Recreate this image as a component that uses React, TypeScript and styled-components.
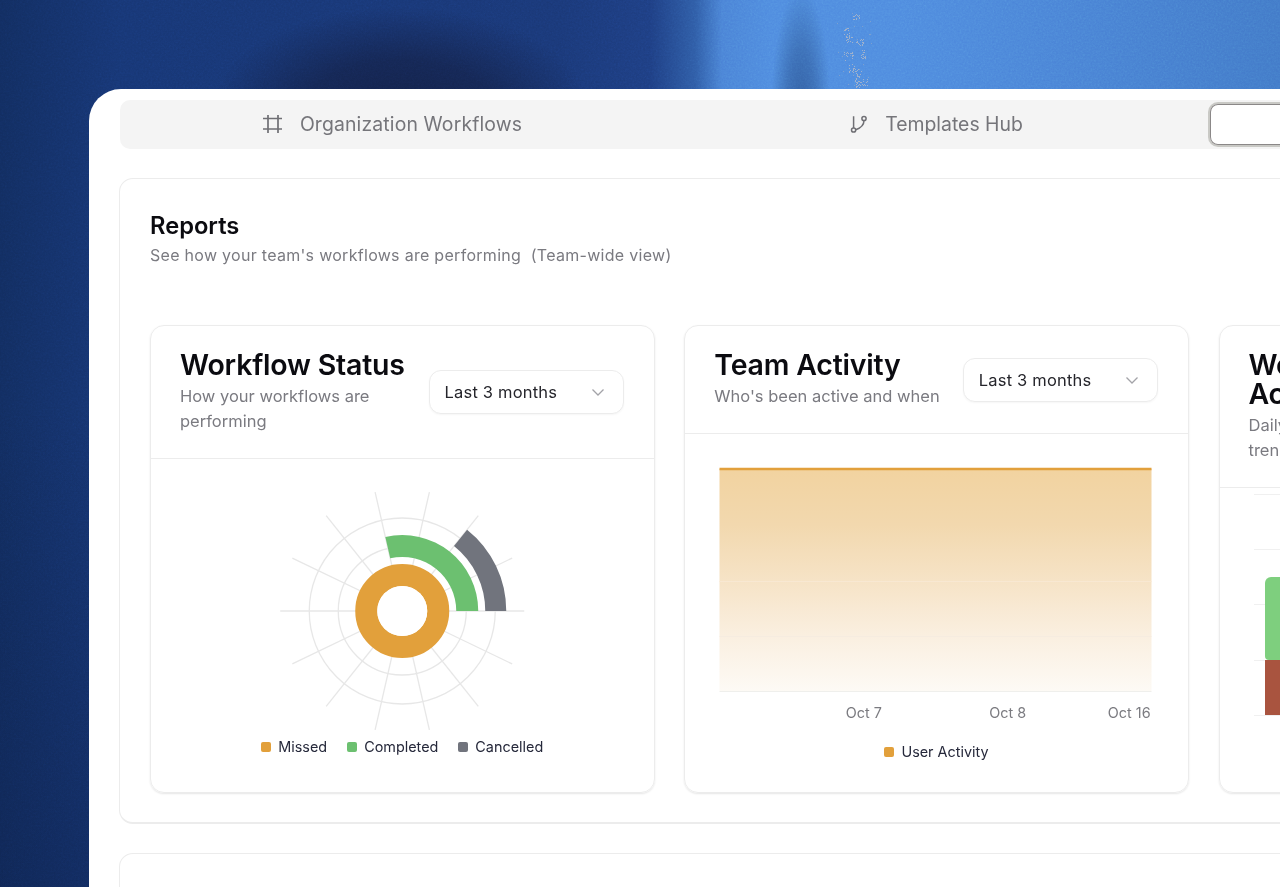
import React from 'react';
import styled, { createGlobalStyle } from 'styled-components';

const Global = createGlobalStyle`
  html, body { margin: 0; padding: 0; height: 100%; }
  body { font-family: Inter, "Noto Sans", "Liberation Sans", sans-serif; overflow: hidden; }
`;

const Stage = styled.div`
  position: relative;
  width: 1280px;
  height: 887px;
  overflow: hidden;
  padding: 89px 0 0 89px;
  box-sizing: border-box;
  background:
    linear-gradient(180deg, rgba(10, 24, 60, 0) 45%, rgba(10, 24, 60, 0.3) 100%),
    radial-gradient(ellipse 190px 105px at 400px 112px, rgba(19, 32, 70, 0.95) 0%, rgba(19, 32, 70, 0.7) 50%, rgba(19, 32, 70, 0) 100%),
    radial-gradient(ellipse 30px 125px at 801px 112px, rgba(38, 76, 136, 0.7) 0%, rgba(38, 76, 136, 0.45) 50%, rgba(38, 76, 136, 0) 100%),
    linear-gradient(90deg, #122d60 0, #173674 120px, #1a3877 560px, #1e3e82 650px, #2f5ca6 695px, #4a82d6 722px, #4f8bdf 770px, #4f8bdf 900px, #4a83d6 1060px, #4279c8 1280px);
`;

const Grain = styled.svg`
  position: absolute;
  left: 0;
  top: 0;
  opacity: 0.22;
  mix-blend-mode: overlay;
`;

const Speckle = styled.svg`
  position: absolute;
  left: 836px;
  top: 4px;
`;

const Window = styled.main`
  position: relative;
  width: 1750px;
  height: 900px;
  background: #fff;
  border-radius: 32px 0 0 0;
  padding: 11px 0 0 31px;
  box-sizing: border-box;
`;

const TabBar = styled.nav`
  width: 1635px;
  height: 49px;
  box-sizing: border-box;
  background: #f4f4f4;
  border-radius: 10px;
  padding: 4px;
  display: grid;
  grid-template-columns: repeat(3, 539px);
  gap: 4px;
`;

const Tab = styled.div<{ $active?: boolean }>`
  display: flex;
  align-items: center;
  justify-content: center;
  gap: 17px;
  padding-bottom: 2px;
  color: #75757a;
  font-size: 19.4px;
  font-weight: 400;
  letter-spacing: 0.14px;
  border-radius: 8px;
  &:first-child {
    padding-right: 2px;
  }
  &:nth-child(2) {
    letter-spacing: 0;
  }
  ${(p) => p.$active && `
    background: #fff;
    box-shadow: inset 0 0 0 1px #8b8888, 0 0 0 2px #c9c9c5;
  `}
`;

const Panel = styled.section<{ $height: number }>`
  margin-top: 29px;
  margin-left: -1px;
  width: 1636px;
  height: ${(p) => p.$height}px;
  box-sizing: border-box;
  border: 1px solid #ececec;
  border-bottom-width: 2px;
  border-radius: 14px;
  padding: 31px 29px 29px 30px;
`;

const ReportTitle = styled.h1`
  margin: 0;
  font-size: 23.7px;
  line-height: 32px;
  font-weight: 600;
  color: #0b0b10;
`;

const ReportSub = styled.p`
  margin: 1px 0 0;
  font-size: 16px;
  line-height: 24px;
  letter-spacing: 0.29px;
  color: #7a7a80;
`;

const CardRow = styled.div`
  margin-top: 58px;
  display: grid;
  grid-template-columns: repeat(3, 504.5px);
  gap: 29.75px;
`;

const Card = styled.article`
  height: 468px;
  box-sizing: border-box;
  border: 1px solid #ececec;
  border-radius: 14px;
  box-shadow: 0 1px 2px rgba(0, 0, 0, 0.1);
  display: flex;
  flex-direction: column;
  overflow: hidden;
`;

const CardHead = styled.header`
  display: flex;
  align-items: center;
  justify-content: space-between;
  gap: 16px;
  padding: 24px 30px 24px 29px;
  border-bottom: 1px solid #ececec;
`;

const CardHeadText = styled.div`
  min-width: 0;
  flex: 1;
`;

const CardTitle = styled.h2`
  margin: 0;
  font-size: 28.5px;
  line-height: 29px;
  font-weight: 600;
  color: #0b0b10;
  letter-spacing: -0.2px;
`;

const CardSub = styled.p`
  margin: 5px 0 0;
  font-size: 16.5px;
  line-height: 25px;
  color: #7a7a80;
`;

const Select = styled.button`
  flex: none;
  width: 195px;
  height: 44px;
  box-sizing: border-box;
  padding: 0 17px 0 15px;
  display: flex;
  align-items: center;
  justify-content: space-between;
  background: #fff;
  border: 1px solid #ececec;
  border-radius: 12px;
  box-shadow: 0 1px 2px rgba(0, 0, 0, 0.04);
  font: inherit;
  font-size: 16.5px;
  letter-spacing: 0.2px;
  color: #25252b;
`;

const CardBody = styled.div`
  flex: 1;
  position: relative;
  min-height: 0;
`;

const ChartSvg = styled.svg`
  display: block;
`;

const Legend = styled.div`
  display: flex;
  justify-content: center;
  gap: 20px;
  font-size: 14.4px;
  line-height: 20px;
  color: #25283a;
`;

const AreaLegend = styled(Legend)`
  margin-top: 19px;
`;

const LegendItem = styled.span`
  display: inline-flex;
  align-items: center;
  gap: 7px;
`;

const Swatch = styled.i<{ $color: string }>`
  width: 10px;
  height: 10px;
  border-radius: 2px;
  background: ${(p) => p.$color};
`;

const AxisRow = styled.div`
  position: relative;
  height: 20px;
  font-size: 14.4px;
  line-height: 20px;
  color: #7b7b80;
`;

const AxisLabel = styled.span<{ $x: number }>`
  position: absolute;
  left: ${(p) => p.$x}px;
  top: 0;
  transform: translateX(-50%);
`;

const HashIcon = () => (
  <svg width="20" height="20" viewBox="0 0 20 20" fill="none" stroke="#6f6f74" strokeWidth="1.7">
    <path d="M0 4.5h19M0 15h19M5 1v18M15 1v18" />
  </svg>
);

const BranchIcon = () => (
  <svg width="18" height="18" viewBox="0 0 18 18" fill="none" stroke="#6f6f74" strokeWidth="1.5">
    <circle cx="3.6" cy="15" r="2.1" />
    <circle cx="14" cy="3.5" r="2.1" />
    <path d="M3.6 12.9V1.2M14 5.6c0 4.4-3.6 7.6-8.3 9.2" />
  </svg>
);

const Chevron = () => (
  <svg width="16" height="16" viewBox="0 0 16 16" fill="none" stroke="#a3a3a8" strokeWidth="1.3">
    <path d="M2.5 5.5 8 11l5.5-5.5" />
  </svg>
);

const polar = (r: number, deg: number): [number, number] => {
  const a = (deg * Math.PI) / 180;
  return [r * Math.cos(a), -r * Math.sin(a)];
};

const arc = (ri: number, ro: number, deg: number) => {
  const [x1, y1] = polar(ro, 0);
  const [x2, y2] = polar(ro, deg);
  const [x3, y3] = polar(ri, deg);
  const [x4, y4] = polar(ri, 0);
  return `M${x1} ${y1}A${ro} ${ro} 0 0 0 ${x2} ${y2}L${x3} ${y3}A${ri} ${ri} 0 0 1 ${x4} ${y4}Z`;
};

const spokes = Array.from({ length: 14 }, (_, i) => (i * 360) / 14);

const RadialChart = () => (
  <ChartSvg width="502.5" height="278" viewBox="-251.25 -152 502.5 278">
    <g stroke="#e7e7e7" strokeWidth="1.3" fill="none">
      {[35, 64, 93].map((r) => (
        <circle key={r} r={r} />
      ))}
      {spokes.map((d) => {
        const [x, y] = polar(122, d);
        return <line key={d} x1="0" y1="0" x2={x} y2={y} />;
      })}
    </g>
    <path d={arc(83, 104, 51.43)} fill="#71747d" />
    <path d={arc(54, 76, 102.86)} fill="#6cc070" />
    <circle r="36" fill="none" stroke="#e2a03b" strokeWidth="22" />
    <circle r="25" fill="#fff" />
  </ChartSvg>
);

const AreaChart = () => (
  <ChartSvg width="502.5" height="269" viewBox="0 0 502.5 269">
    <defs>
      <linearGradient id="areaFill" x1="0" y1="0" x2="0" y2="1">
        <stop offset="0" stopColor="#f2d3a0" />
        <stop offset="0.25" stopColor="#f2d8ae" />
        <stop offset="0.5" stopColor="#f6e3c6" />
        <stop offset="0.75" stopColor="#faefe0" />
        <stop offset="1" stopColor="#fdfaf5" />
      </linearGradient>
    </defs>
    <rect x="34.5" y="35" width="432" height="222" fill="url(#areaFill)" />
    <g strokeWidth="1">
      <line x1="34.5" x2="466.5" y1="147.5" y2="147.5" stroke="#f8e8d2" />
      <line x1="34.5" x2="466.5" y1="202.5" y2="202.5" stroke="#f6ece0" />
      <line x1="34.5" x2="466.5" y1="257.5" y2="257.5" stroke="#efefec" />
    </g>
    <line x1="34.5" x2="466.5" y1="35" y2="35" stroke="#e2a03b" strokeWidth="2.6" />
  </ChartSvg>
);

const BarsChart = () => (
  <ChartSvg width="502.5" height="240" viewBox="0 0 502.5 240">
    <g stroke="#f0f0f0" strokeWidth="1">
      {[6, 61, 116, 172, 227].map((y) => (
        <line key={y} x1="34" x2="503" y1={y + 0.5} y2={y + 0.5} />
      ))}
    </g>
    <path d="M45 168V95a6 6 0 0 1 6-6H503v83H49a4 4 0 0 1-4-4Z" fill="#7ecf7e" />
    <rect x="45" y="172" width="458" height="55" fill="#a9543f" />
  </ChartSvg>
);

const rand = (seed: number) => {
  const v = Math.sin(seed * 12.9898) * 43758.5453;
  return v - Math.floor(v);
};

const clusters = [
  [20, 12, 3, 4], [10, 28, 3, 5], [14, 36, 4, 4], [24, 38, 4, 3], [13, 52, 5, 4],
  [27, 50, 2, 5], [16, 64, 4, 4], [21, 70, 5, 5], [26, 78, 5, 4], [21, 80, 3, 5],
];

const dots = clusters.flatMap(([cx, cy, sx, sy], c) =>
  Array.from({ length: 16 }, (_, i) => ({
    x: Math.round(cx + (rand(c * 31 + i) - 0.5) * 2 * sx),
    y: Math.round(cy + (rand(c * 17 + i * 3 + 5) - 0.5) * 2 * sy),
  })),
);

const strays = Array.from({ length: 22 }, (_, i) => ({
  x: Math.round(rand(i + 101) * 36),
  y: Math.round(rand(i + 203) * 82),
}));

const Card1 = () => (
  <Card>
    <CardHead>
      <CardHeadText>
        <CardTitle>Workflow Status</CardTitle>
        <CardSub>How your workflows are performing</CardSub>
      </CardHeadText>
      <Select>
        Last 3 months
        <Chevron />
      </Select>
    </CardHead>
    <CardBody>
      <RadialChart />
      <Legend>
        <LegendItem>
          <Swatch $color="#e2a03b" />
          Missed
        </LegendItem>
        <LegendItem>
          <Swatch $color="#6cc070" />
          Completed
        </LegendItem>
        <LegendItem>
          <Swatch $color="#71747d" />
          Cancelled
        </LegendItem>
      </Legend>
    </CardBody>
  </Card>
);

const Card2 = () => (
  <Card>
    <CardHead>
      <CardHeadText>
        <CardTitle>Team Activity</CardTitle>
        <CardSub>Who's been active and when</CardSub>
      </CardHeadText>
      <Select>
        Last 3 months
        <Chevron />
      </Select>
    </CardHead>
    <CardBody>
      <AreaChart />
      <AxisRow>
        <AxisLabel $x={178.5}>Oct 7</AxisLabel>
        <AxisLabel $x={322.5}>Oct 8</AxisLabel>
        <AxisLabel $x={444}>Oct 16</AxisLabel>
      </AxisRow>
      <AreaLegend>
        <LegendItem>
          <Swatch $color="#e2a03b" />
          User Activity
        </LegendItem>
      </AreaLegend>
    </CardBody>
  </Card>
);

const Card3 = () => (
  <Card>
    <CardHead>
      <CardHeadText>
        <CardTitle>Workflow Activity</CardTitle>
        <CardSub>Daily workflow activity and trends over time</CardSub>
      </CardHeadText>
      <Select>
        Last 3 months
        <Chevron />
      </Select>
    </CardHead>
    <CardBody>
      <BarsChart />
    </CardBody>
  </Card>
);

export default function App() {
  return (
    <>
      <Global />
      <Stage>
        <Grain width="1280" height="887" aria-hidden="true">
          <filter id="grain">
            <feTurbulence type="fractalNoise" baseFrequency="0.55" numOctaves="2" seed="4" />
            <feColorMatrix type="saturate" values="0" />
          </filter>
          <rect width="1280" height="887" filter="url(#grain)" />
        </Grain>
        <Speckle width="36" height="88" viewBox="0 0 36 88" aria-hidden="true">
          {dots.map((d, i) => (
            <rect key={i} x={d.x} y={d.y} width="1" height="1" fill="#9fb1cc" />
          ))}
          {strays.map((d, i) => (
            <rect key={`s${i}`} x={d.x} y={d.y} width="1" height="1" fill="#8fa6c8" opacity="0.7" />
          ))}
        </Speckle>
        <Window>
          <TabBar>
            <Tab>
              <HashIcon />
              Organization Workflows
            </Tab>
            <Tab>
              <BranchIcon />
              Templates Hub
            </Tab>
            <Tab $active />
          </TabBar>
          <Panel $height={646}>
            <ReportTitle>Reports</ReportTitle>
            <ReportSub>See how your team's workflows are performing&nbsp; (Team-wide view)</ReportSub>
            <CardRow>
              <Card1 />
              <Card2 />
              <Card3 />
            </CardRow>
          </Panel>
          <Panel $height={200} />
        </Window>
      </Stage>
    </>
  );
}
